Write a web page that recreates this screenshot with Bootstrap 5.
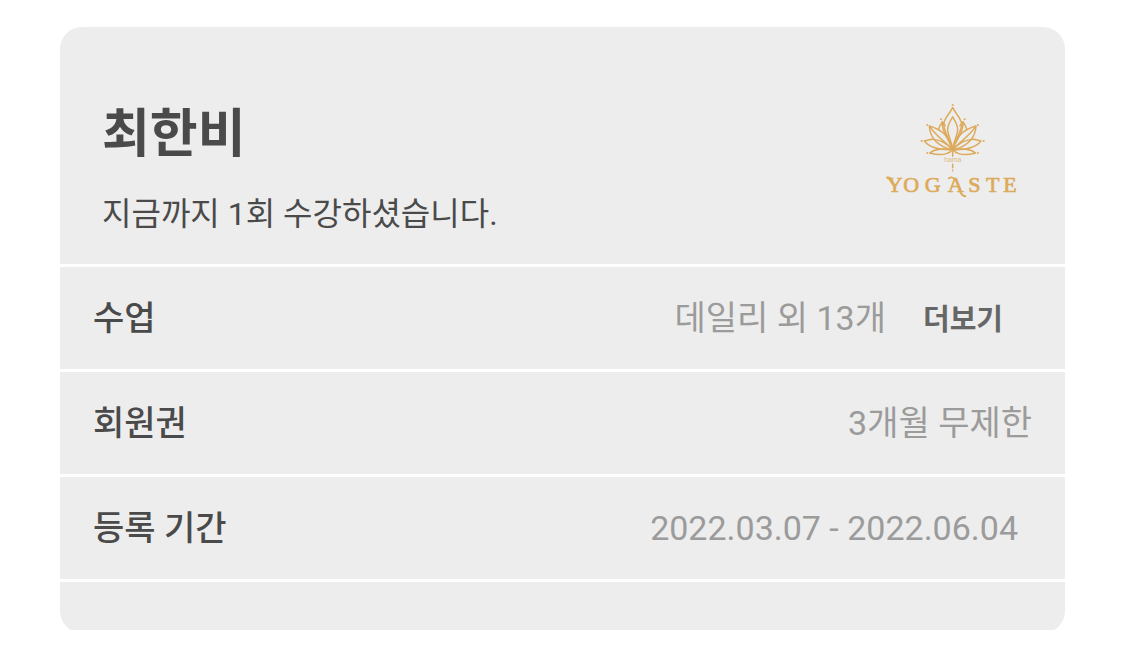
<!DOCTYPE html>
<html lang="ko">
<head>
<meta charset="utf-8">
<meta name="viewport" content="width=device-width, initial-scale=1">
<title>최한비</title>
<link href="https://cdn.jsdelivr.net/npm/bootstrap@5.3.0/dist/css/bootstrap.min.css" rel="stylesheet">
<style>
  body { background: #fff; color: #4a4a4a; font-family: Roboto, "Noto Sans CJK KR", sans-serif; }
  .page { padding: 27px 60px 0; }
  .member-card { background: #ededed; border-radius: 22px; overflow: hidden; clip-path: inset(0 0 3px 0); }
  .member-head { padding: 68px 40px 26px 42px; }
  .member-name { font-size: 52px; line-height: 80px; }
  .member-note { font-size: 32px; line-height: 48px; margin-top: 15px; }
  .member-row { min-height: 105px; border-top: 3px solid #fff; padding: 0 33px; font-size: 34px; line-height: 50px; }
  .member-row dt { font-weight: 500; }
  .member-row dd { color: #9b9b9b; }
  .member-row .period { padding-right: 14px; }
  .more-btn { color: #666; font-size: 29px; line-height: 44px; font-weight: 700; border: 0; background: none; padding: 4px 29px 0 37px; }
  .member-foot { height: 54px; border-top: 3px solid #fff; }
</style>
</head>
<body>
<main class="page">
  <section class="member-card">
    <header class="member-head d-flex justify-content-between align-items-start">
      <div>
        <h1 class="member-name fw-bold mb-0">최한비</h1>
        <p class="member-note mb-0">지금까지 1회 수강하셨습니다.</p>
      </div>
      <svg class="flex-shrink-0" width="145" height="110" viewBox="0 0 435 330" role="img" aria-label="Yogaste">
        <defs>
          <g id="petals">
            <path d="M218 38C208 58 190 72 191 90C195 115 212 140 218 164"/>
            <path d="M218 66C210 79 202 91 203 106C206 127 216 144 218 164"/>
            <path d="M175 104Q179 92 187 80L196 92M187 82C182 105 207 133 218 164"/>
            <path d="M148 93C149 125 171 155 218 164C212 131 190 105 148 93Z"/>
            <path d="M149 94C164 119 195 140 218 164"/>
            <path d="M154 133L133 138C149 158 184 165 218 164C196 142 171 130 148 134"/>
            <path d="M149 174C166 160 188 161 218 164C201 182 174 181 149 174Z"/>
          </g>
        </defs>
        <g fill="none" stroke="#dcaa5a" stroke-width="4.4" stroke-linejoin="round" stroke-linecap="round">
          <use href="#petals"/>
          <use href="#petals" transform="translate(436 0) scale(-1 1)"/>
          <path d="M218 160V184M218 208V218M218 226V227"/>
        </g>
        <g fill="#dcaa5a">
          <circle cx="218" cy="30" r="3"/>
          <circle cx="183" cy="73" r="3"/><circle cx="254" cy="73" r="3"/>
          <circle cx="142" cy="90" r="3"/><circle cx="294" cy="90" r="3"/>
          <circle cx="125" cy="138" r="3"/><circle cx="311" cy="138" r="3"/>
          <circle cx="142" cy="174" r="3"/><circle cx="294" cy="174" r="3"/>
        </g>
        <text x="218" y="201" text-anchor="middle" fill="#dfba80" font-family="Liberation Sans, sans-serif" font-size="21">hama</text>
        <text x="20 70 134 203 265 318 370" y="291" fill="#dcaa5a" stroke="#dcaa5a" stroke-width="2" font-family="Liberation Serif, serif" font-size="66">YOGASTE</text>
        <g fill="none" stroke="#dcaa5a" stroke-width="5" stroke-linecap="round">
          <path d="M21 247Q32 246 38 258"/>
          <path d="M206 250Q216 243 226 254"/>
          <path d="M238 280Q242 302 256 304" stroke-width="6"/>
        </g>
      </svg>
    </header>
    <dl class="mb-0">
      <div class="member-row d-flex justify-content-between align-items-center">
        <dt>수업</dt>
        <dd class="mb-0 d-flex align-items-center">데일리 외 13개<button type="button" class="more-btn">더보기</button></dd>
      </div>
      <div class="member-row d-flex justify-content-between align-items-center">
        <dt>회원권</dt>
        <dd class="mb-0">3개월 무제한</dd>
      </div>
      <div class="member-row d-flex justify-content-between align-items-center">
        <dt>등록 기간</dt>
        <dd class="mb-0 period">2022.03.07 - 2022.06.04</dd>
      </div>
    </dl>
    <div class="member-foot"></div>
  </section>
</main>
<script src="https://cdn.jsdelivr.net/npm/bootstrap@5.3.0/dist/js/bootstrap.bundle.min.js"></script>
</body>
</html>
